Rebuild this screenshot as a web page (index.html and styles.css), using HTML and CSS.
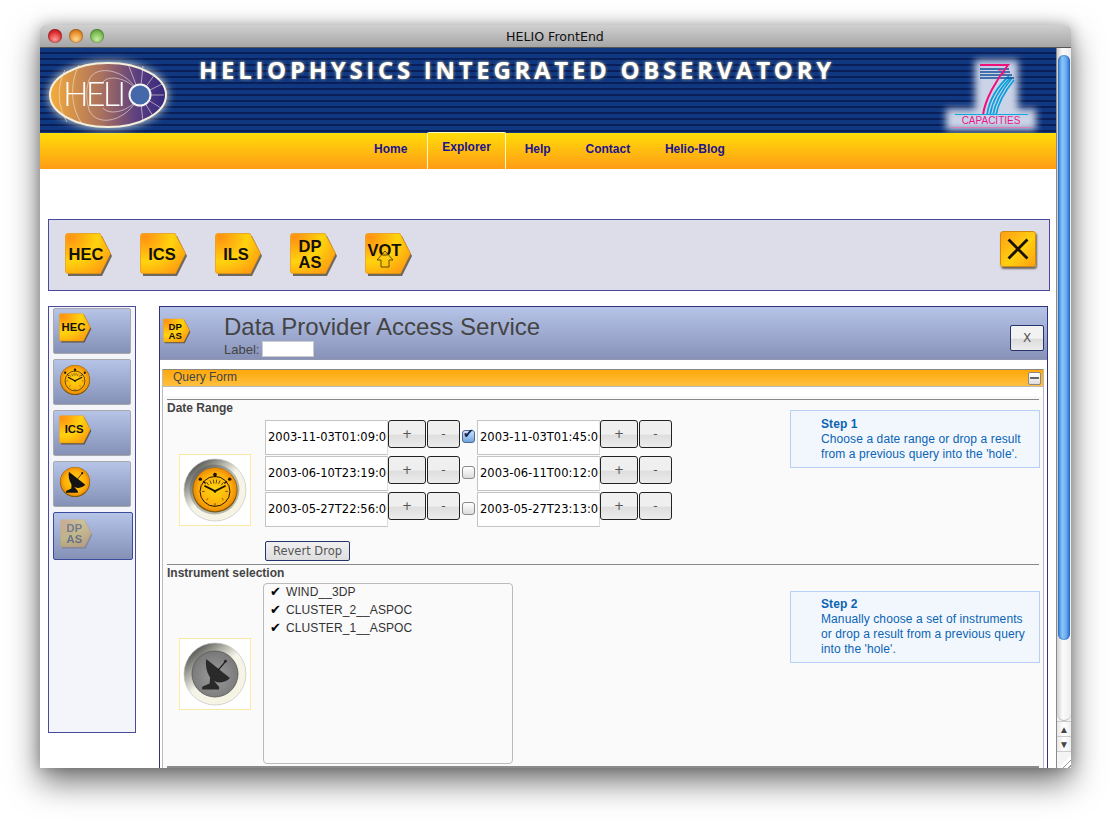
FILE: index.html
```html
<!DOCTYPE html>
<html lang="en">
<head>
    <meta charset="UTF-8">
    <title>HELIO FrontEnd</title>
    <link rel="stylesheet" href="styles.css">
</head>
<body>
    <!-- shared icon shapes -->
    <svg class="defs" aria-hidden="true">
        <defs>
            <radialGradient id="tagFill" cx="0.1" cy="0.1" r="1.1">
                <stop offset="0" stop-color="#ff9212"/>
                <stop offset="0.55" stop-color="#ffd30e"/>
                <stop offset="1" stop-color="#ff9a10"/>
            </radialGradient>
            <radialGradient id="goldFill" cx="0.5" cy="0.5" r="0.52">
                <stop offset="0" stop-color="#ffd40e"/>
                <stop offset="0.7" stop-color="#ffb00a"/>
                <stop offset="1" stop-color="#ea8406"/>
            </radialGradient>
            <radialGradient id="greyFill" cx="0.5" cy="0.55" r="0.55">
                <stop offset="0" stop-color="#9c9c9c"/>
                <stop offset="1" stop-color="#787878"/>
            </radialGradient>
            <linearGradient id="bezelFill" x1="0.1" y1="0.05" x2="0.85" y2="0.95">
                <stop offset="0" stop-color="#3a3a3a"/>
                <stop offset="0.28" stop-color="#a8a8a0"/>
                <stop offset="0.5" stop-color="#f4f4e8"/>
                <stop offset="1" stop-color="#f6f4e2"/>
            </linearGradient>
            <linearGradient id="helioFill" x1="0" y1="0" x2="1" y2="0">
                <stop offset="0" stop-color="#f6ac3a"/>
                <stop offset="0.45" stop-color="#a8705f"/>
                <stop offset="0.75" stop-color="#5c3f80"/>
                <stop offset="1" stop-color="#33277e"/>
            </linearGradient>
            <symbol id="tag" viewBox="0 0 48 43">
                <path d="M3 3 H37 L47 23 L37 43 H3 Z" fill="#4a4030" opacity="0.75"/>
                <path d="M3 0.5 H35 L45.5 20.5 L35.5 40.5 H3 Q0.5 40.5 0.5 38 V3 Q0.5 0.5 3 0.5 Z" fill="url(#tagFill)" stroke="#e8960c" stroke-width="0.7"/>
            </symbol>
            <symbol id="clock" viewBox="0 0 34 34">
                <circle cx="17" cy="17" r="16" fill="#7a5a08"/>
                <circle cx="17" cy="16.6" r="15.4" fill="url(#goldFill)"/>
                <circle cx="17" cy="18" r="10.6" fill="none" stroke="#1c1400" stroke-width="0.7"/>
                <circle cx="17" cy="6" r="1.3" fill="#1c1400"/>
                <circle cx="6.6" cy="9.3" r="1.2" fill="#1c1400"/>
                <circle cx="27.4" cy="9.3" r="1.2" fill="#1c1400"/>
                <path d="M8.6 10.8 L10.4 12.4 M25.4 10.8 L23.6 12.4 M17 7 V8" stroke="#1c1400" stroke-width="1"/>
                <path d="M9.5 14 L17 17.8 L24.5 14" fill="none" stroke="#1c1400" stroke-width="1.3"/>
                <path d="M11 11.5 L12.6 13.6 M13.4 10.3 L14.5 12.8 M15.8 9.6 L16.2 12.4 M18.2 9.6 L17.8 12.4 M20.6 10.3 L19.5 12.8 M23 11.5 L21.4 13.6 M17 26.4 V28 M8 18 H9.6 M24.4 18 H26 M11 24 L12.2 22.9 M23 24 L21.8 22.9" stroke="#1c1400" stroke-width="0.5"/>
                <circle cx="17" cy="18" r="0.9" fill="#1c1400"/>
            </symbol>
            <symbol id="dishMark" viewBox="0 0 34 34">
                <path d="M10.5 6 L28 20 C24 24.5 16.5 24.5 13 19 C10.5 15 9.8 10.5 10.5 6 Z"/>
                <path d="M13.5 18 L13 24 L7.5 26.5 V28.5 H20 V26.5 L17 23 Z"/>
                <path d="M19.5 14 L24.5 8" stroke="#111" stroke-width="0.8"/>
                <circle cx="24.7" cy="7.6" r="1.1"/>
            </symbol>
            <symbol id="dish" viewBox="0 0 34 34">
                <circle cx="17" cy="17" r="16" fill="#7a5a08"/>
                <circle cx="17" cy="16.6" r="15.4" fill="url(#goldFill)"/>
                <use href="#dishMark" width="34" height="34" fill="#141414"/>
            </symbol>
        </defs>
    </svg>

    <div class="window">
        <div class="titlebar">
            <span class="light light-red"></span>
            <span class="light light-amber"></span>
            <span class="light light-green"></span>
            <span class="window-title">HELIO FrontEnd</span>
        </div>
        <div class="window-body">
            <div class="page">
                <header class="banner">
                    <svg class="helio-logo" viewBox="0 0 130 78">
                        <ellipse cx="65" cy="39" rx="58" ry="32" fill="url(#helioFill)" stroke="#f4f0dc" stroke-width="2"/>
                        <g fill="none" stroke="#f0e6e2" stroke-width="0.7" opacity="0.85">
                            <path d="M22 14 C14 30 14 50 24 66"/>
                            <path d="M36 9 C26 28 28 54 40 69"/>
                            <path d="M97 39 C84 12 52 8 46 24 C42 36 44 46 46 54 C54 72 84 66 97 39 Z"/>
                            <path d="M97 39 C88 22 66 18 60 26 M97 39 C88 56 66 60 60 52"/>
                            <path d="M97 39 L112 18 M97 39 L119 28 M97 39 L121 39 M97 39 L118 52 M97 39 L110 60 M97 39 L100 66 M97 39 L100 10 M97 39 L85 8"/>
                        </g>
                        <circle cx="97" cy="39" r="10.5" fill="#4468aa" stroke="#f4f4f4" stroke-width="2"/>
                        <text class="helio-word" x="20" y="50" textLength="63">HELI</text>
                    </svg>
                    <h1 class="site-title">HELIOPHYSICS INTEGRATED OBSERVATORY</h1>
                    <svg class="fp7-logo" viewBox="0 0 104 84">
                        <defs>
                            <filter id="fp7Blur" x="-20%" y="-20%" width="140%" height="140%">
                                <feGaussianBlur stdDeviation="3.5"/>
                            </filter>
                        </defs>
                        <path d="M36 11 H79 V60 H97 V81 H7 V60 H36 Z" fill="#cbd3e6" filter="url(#fp7Blur)"/>
                        <g fill="none" stroke="#0a9fdc" stroke-width="1.7">
                            <path d="M48 66 C50 52 58 38 70 27"/>
                            <path d="M51 66 C53 53 61 39 72 28"/>
                            <path d="M54 66 C56 54 64 40 73 29"/>
                            <path d="M57 66 C59 55 66 42 75 31"/>
                        </g>
                        <path d="M41 20 H70 M41 23 H71 M41 26 H73 M41 29 H75" stroke="#14509c" stroke-width="1.6"/>
                        <path d="M41 16 H69 C58 30 46 50 44 66" fill="none" stroke="#f0107c" stroke-width="2"/>
                        <path d="M59 21 L63 21 M62 25 L66 25" stroke="#f0107c" stroke-width="1.2"/>
                        <path d="M16 65.5 H89" stroke="#10a8e0" stroke-width="1.2"/>
                        <text class="fp7-word" x="52" y="75">CAPACITIES</text>
                        <path d="M12 78.5 H93" stroke="#f070b0" stroke-width="0.8"/>
                    </svg>
                </header>

                <nav class="main-nav">
                    <a class="nav-item">Home</a>
                    <a class="nav-item nav-active">Explorer</a>
                    <a class="nav-item">Help</a>
                    <a class="nav-item">Contact</a>
                    <a class="nav-item">Helio-Blog</a>
                </nav>

                <section class="toolbar">
                    <svg class="tag-lg" viewBox="0 0 48 43"><use href="#tag" width="48" height="43"/><text class="tag-text" x="21" y="26.5" text-anchor="middle">HEC</text></svg>
                    <svg class="tag-lg" viewBox="0 0 48 43"><use href="#tag" width="48" height="43"/><text class="tag-text" x="22" y="26.5" text-anchor="middle">ICS</text></svg>
                    <svg class="tag-lg" viewBox="0 0 48 43"><use href="#tag" width="48" height="43"/><text class="tag-text" x="21" y="26.5" text-anchor="middle">ILS</text></svg>
                    <svg class="tag-lg" viewBox="0 0 48 43"><use href="#tag" width="48" height="43"/><text class="tag-text" x="20" y="19" text-anchor="middle">DP</text><text class="tag-text" x="20" y="35" text-anchor="middle">AS</text></svg>
                    <svg class="tag-lg" viewBox="0 0 48 43"><use href="#tag" width="48" height="43"/><text class="tag-text" x="19.5" y="23" text-anchor="middle">VOT</text><path d="M20 18 L28 27 H24 V34 H16 V27 H12 Z" fill="#ffc80e" fill-opacity="0.6" stroke="#3a3000" stroke-width="0.8"/></svg>
                    <button class="clear-all">
                        <svg viewBox="0 0 36 36"><path d="M8 8 L28 28 M28 8 L8 28" stroke="#1a1200" stroke-width="3"/></svg>
                    </button>
                </section>

                <div class="workspace">
                    <aside class="history">
                        <div class="history-item"><svg class="tag-sm" viewBox="0 0 48 43"><use href="#tag" width="48" height="43"/><text class="tag-text" x="21" y="26.5" text-anchor="middle">HEC</text></svg></div>
                        <div class="history-item"><svg class="round-sm"><use href="#clock" width="32" height="32"/></svg></div>
                        <div class="history-item"><svg class="tag-sm" viewBox="0 0 48 43"><use href="#tag" width="48" height="43"/><text class="tag-text" x="22" y="26.5" text-anchor="middle">ICS</text></svg></div>
                        <div class="history-item"><svg class="round-sm"><use href="#dish" width="32" height="32"/></svg></div>
                        <div class="history-item history-current"><svg class="tag-sm tag-faded" viewBox="0 0 48 43"><use href="#tag" width="48" height="43"/><text class="tag-text" x="21" y="19" text-anchor="middle">DP</text><text class="tag-text" x="21" y="35" text-anchor="middle">AS</text></svg></div>
                    </aside>

                    <main class="panel">
                        <div class="panel-head">
                            <svg class="tag-head" viewBox="0 0 48 43"><use href="#tag" width="48" height="43"/><text class="tag-text" x="21" y="19" text-anchor="middle">DP</text><text class="tag-text" x="21" y="35" text-anchor="middle">AS</text></svg>
                            <div class="panel-titles">
                                <h2 class="panel-title">Data Provider Access Service</h2>
                                <label class="panel-label">Label: <input class="label-input" type="text"></label>
                            </div>
                            <button class="close-btn">X</button>
                        </div>

                        <div class="form-box">
                            <div class="form-bar">
                                <span>Query Form</span>
                                <span class="collapse-btn"></span>
                            </div>
                            <div class="form-body">
                                <div class="section-line">Date Range</div>
                                <div class="section section-dates">
                                    <div class="icon-box">
                                        <svg class="bezel" viewBox="0 0 64 64">
                                            <circle cx="32" cy="32" r="31" fill="url(#bezelFill)" stroke="#bbb" stroke-width="0.6"/>
                                            <circle cx="31.5" cy="31.5" r="25" fill="#444" opacity="0.35"/>
                                            <use href="#clock" x="8" y="8" width="48" height="48"/>
                                        </svg>
                                    </div>
                                    <div class="dates">
                                        <div class="date-row">
                                            <input class="date-input" type="text" value="2003-11-03T01:09:00">
                                            <button class="step-btn">+</button>
                                            <button class="step-btn step-minus">-</button>
                                            <input class="date-check" type="checkbox" checked>
                                            <input class="date-input" type="text" value="2003-11-03T01:45:00">
                                            <button class="step-btn">+</button>
                                            <button class="step-btn step-minus">-</button>
                                        </div>
                                        <div class="date-row">
                                            <input class="date-input" type="text" value="2003-06-10T23:19:00">
                                            <button class="step-btn">+</button>
                                            <button class="step-btn step-minus">-</button>
                                            <input class="date-check" type="checkbox">
                                            <input class="date-input" type="text" value="2003-06-11T00:12:00">
                                            <button class="step-btn">+</button>
                                            <button class="step-btn step-minus">-</button>
                                        </div>
                                        <div class="date-row">
                                            <input class="date-input" type="text" value="2003-05-27T22:56:00">
                                            <button class="step-btn">+</button>
                                            <button class="step-btn step-minus">-</button>
                                            <input class="date-check" type="checkbox">
                                            <input class="date-input" type="text" value="2003-05-27T23:13:00">
                                            <button class="step-btn">+</button>
                                            <button class="step-btn step-minus">-</button>
                                        </div>
                                        <button class="revert-btn">Revert Drop</button>
                                    </div>
                                    <div class="step-note">
                                        <strong>Step 1</strong><br>
                                        Choose a date range or drop a result from a previous query into the 'hole'.
                                    </div>
                                </div>

                                <div class="section-line">Instrument selection</div>
                                <div class="section section-instruments">
                                    <div class="icon-box icon-box-dish">
                                        <svg class="bezel" viewBox="0 0 64 64">
                                            <circle cx="32" cy="32" r="31" fill="url(#bezelFill)" stroke="#bbb" stroke-width="0.6"/>
                                            <circle cx="32" cy="32" r="23" fill="url(#greyFill)" stroke="#555" stroke-width="0.8"/>
                                            <use href="#dishMark" x="9" y="9" width="46" height="46" fill="#2a2a2a"/>
                                        </svg>
                                    </div>
                                    <ul class="instruments">
                                        <li>WIND__3DP</li>
                                        <li>CLUSTER_2__ASPOC</li>
                                        <li>CLUSTER_1__ASPOC</li>
                                    </ul>
                                    <div class="step-note step-note-2">
                                        <strong>Step 2</strong><br>
                                        Manually choose a set of instruments or drop a result from a previous query into the 'hole'.
                                    </div>
                                </div>
                                <div class="form-end"></div>
                            </div>
                        </div>
                    </main>
                </div>
            </div>

            <div class="scrollbar">
                <div class="scroll-track"><div class="scroll-thumb"></div></div>
                <div class="scroll-arrow">&#9650;</div>
                <div class="scroll-arrow">&#9660;</div>
                <div class="scroll-grip"></div>
            </div>
        </div>
    </div>
</body>
</html>
```

FILE: styles.css
```css
html, body {
    height: 100%;
}

body {
    margin: 0;
    padding: 25px 0 0 40px;
    box-sizing: border-box;
    background-color: #fff;
    font-family: "Liberation Sans", Arial, sans-serif;
    font-size: 12px;
    overflow: hidden;
}

.defs {
    display: block;
    width: 0;
    height: 0;
}

.window {
    width: 1031px;
    height: 743px;
    display: flex;
    flex-direction: column;
    border-radius: 5px 5px 0 0;
    overflow: hidden;
    box-shadow: 0 14px 32px rgba(0, 0, 0, 0.55), 0 0 14px rgba(0, 0, 0, 0.25);
}

/* title bar */
.titlebar {
    flex: 0 0 23px;
    display: flex;
    align-items: center;
    gap: 7px;
    padding-left: 8px;
    background: linear-gradient(#d0d0d0, #a6a6a6);
    border-bottom: 1px solid #555;
    box-sizing: border-box;
}

.light {
    width: 14px;
    height: 14px;
    border-radius: 50%;
    box-shadow: inset 0 0 2px rgba(0, 0, 0, 0.6);
}

.light-red {
    background: radial-gradient(circle at 50% 75%, #ff9a94, #dc2a2e 60%, #a81820);
}

.light-amber {
    background: radial-gradient(circle at 50% 75%, #ffd890, #e88a28 60%, #b46010);
}

.light-green {
    background: radial-gradient(circle at 50% 75%, #c4f0a0, #78b850 60%, #4a8a2c);
}

.window-title {
    margin-left: 395px;
    font-family: "DejaVu Sans", sans-serif;
    font-size: 12.6px;
    color: #111;
}

.window-body {
    flex: 1;
    display: flex;
    min-height: 0;
}

.page {
    width: 1016px;
    background-color: #fff;
    overflow: hidden;
}

/* banner */
.banner {
    height: 85px;
    display: flex;
    align-items: flex-start;
    background-color: #0e3478;
    background-image: repeating-linear-gradient(#103880 0, #103880 4px, #0a1f58 4px, #0a1f58 6px);
}

.helio-logo {
    width: 130px;
    height: 78px;
    margin: 8px 0 0 3px;
    filter: drop-shadow(0 0 5px rgba(255, 250, 225, 0.9));
}

.helio-word {
    font-family: Lato, sans-serif;
    font-weight: 300;
    font-size: 34px;
    fill: #fff;
}

.site-title {
    margin: 7px 0 0 26px;
    font-family: "Open Sans", sans-serif;
    font-size: 24px;
    font-weight: 700;
    line-height: 30px;
    letter-spacing: 3.7px;
    white-space: nowrap;
    color: #fff;
    text-shadow: 0 0 3px #d8c890;
}

.fp7-logo {
    width: 104px;
    height: 84px;
    margin: 1px 13px 0 auto;
    flex: none;
}

.fp7-word {
    font-family: "Liberation Sans", sans-serif;
    font-size: 10px;
    fill: #e8188c;
    text-anchor: middle;
}

/* nav */
.main-nav {
    height: 36px;
    display: flex;
    justify-content: center;
    padding-left: 3px;
    background: linear-gradient(#ffdc08, #ff9c16);
}

.nav-item {
    padding: 8px 16.4px 0;
    border: 1px solid transparent;
    border-bottom: 0;
    font-weight: bold;
    font-size: 12px;
    color: #1c148c;
}

.nav-active {
    margin: -1px 1px 0 2px;
    padding: 7px 14.4px 0;
    border-color: #fff6c8;
    border-radius: 2px 2px 0 0;
}

/* toolbar of dragable services */
.toolbar {
    height: 72px;
    margin: 50px 6px 15px 8px;
    padding: 0 13px 0 16px;
    box-sizing: border-box;
    display: flex;
    align-items: flex-start;
    gap: 27px;
    background-color: #dddde9;
    border: 1px solid #4a4a9c;
}

.tag-lg {
    width: 48px;
    height: 43px;
    margin-top: 13px;
    flex: none;
    overflow: visible;
}

.tag-text {
    font-family: "Liberation Sans", sans-serif;
    font-weight: bold;
    font-size: 16.5px;
    fill: #141008;
}

.clear-all {
    width: 36px;
    height: 36px;
    margin: 11px 0 0 auto;
    padding: 0;
    border: 1px solid #d08a10;
    border-radius: 3px;
    background: linear-gradient(135deg, #ff9e12, #ffd010 55%, #ffa010);
    box-shadow: 1px 2px 2px rgba(60, 50, 30, 0.7);
}

.clear-all svg {
    display: block;
    width: 100%;
    height: 100%;
}

/* main area */
.workspace {
    display: flex;
    align-items: flex-start;
    padding-left: 8px;
}

.history {
    width: 88px;
    height: 427px;
    box-sizing: border-box;
    flex: none;
    margin-right: 23px;
    padding: 1px 0 0 4px;
    display: flex;
    flex-direction: column;
    gap: 5px;
    background-color: #f3f5fb;
    border: 1px solid #4a4a9c;
}

.history-item {
    width: 78px;
    height: 46px;
    box-sizing: border-box;
    padding: 4px 0 0 5px;
    background: linear-gradient(#b6c4e8, #8490b6);
    border: 1px solid #a8a8a8;
    border-radius: 2px;
}

.history-current {
    width: 80px;
    height: 48px;
    padding: 6px 0 0 6px;
    border-color: #3c4c9c;
}

.tag-sm {
    display: block;
    width: 33px;
    height: 30px;
    overflow: visible;
}

.tag-faded {
    opacity: 0.35;
}

.round-sm {
    display: block;
    width: 32px;
    height: 32px;
}

.panel {
    width: 889px;
    flex: none;
    box-sizing: border-box;
    border: 1px solid #33337c;
    border-bottom: 0;
}

.panel-head {
    height: 53px;
    display: flex;
    align-items: flex-start;
    background: linear-gradient(#b6c4e8, #8892b8);
    border-bottom: 1px solid #9098b0;
    box-sizing: border-box;
}

.tag-head {
    width: 28px;
    height: 26px;
    margin: 11px 0 0 3px;
    flex: none;
    overflow: visible;
}

.panel-titles {
    margin-left: 33px;
}

.panel-title {
    margin: 6px 0 0;
    font-size: 24px;
    font-weight: normal;
    line-height: 28px;
    color: #444;
}

.panel-label {
    display: block;
    font-size: 13px;
    line-height: 17px;
    color: #444;
}

.label-input {
    width: 52px;
    height: 16px;
    margin: 0 0 0 -1px;
    padding: 0;
    box-sizing: border-box;
    vertical-align: top;
    border: 1px solid #ccc;
    background-color: #fff;
}

.close-btn {
    width: 34px;
    height: 26px;
    margin: 18px 3px 0 auto;
    padding: 0;
    border: 1px solid #26336c;
    border-radius: 2px;
    background: linear-gradient(#f2f2f2 50%, #dcdcdc 55%, #ececec);
    font-family: "DejaVu Sans", sans-serif;
    font-size: 12px;
    color: #555;
}

/* query form */
.form-box {
    margin: 9px 3px 0 2px;
    border-left: 1px solid #bbb;
    border-right: 1px solid #bbb;
}

.form-bar {
    height: 18px;
    box-sizing: border-box;
    display: flex;
    align-items: center;
    justify-content: space-between;
    padding: 0 2px 2px 10px;
    background: linear-gradient(#ffa80a, #ffc040);
    border-top: 1px solid #888;
    border-bottom: 1px solid #bbb;
    color: #444;
}

.collapse-btn {
    width: 13px;
    height: 13px;
    box-sizing: border-box;
    margin-top: 2px;
    border: 1px solid #888;
    border-radius: 2px;
    background: linear-gradient(#fff, #ddd);
    display: flex;
    align-items: center;
    justify-content: center;
}

.collapse-btn::before {
    content: "";
    width: 9px;
    height: 2px;
    background-color: #666;
}

.form-body {
    margin-top: 9px;
    padding: 3px 4px 0 4px;
    background-color: #fafafa;
}

.section-line {
    padding-top: 1px;
    border-top: 1px solid #888;
    font-weight: bold;
    font-size: 12px;
    line-height: 14px;
    color: #444;
}

.section {
    display: flex;
    align-items: flex-start;
}

.section-dates {
    height: 149px;
    padding-top: 5px;
    box-sizing: border-box;
}

.icon-box {
    width: 72px;
    height: 72px;
    box-sizing: border-box;
    flex: none;
    margin: 34px 14px 0 12px;
    padding: 3px;
    background-color: #fff;
    border: 1px solid #fce9a6;
}

.bezel {
    display: block;
    width: 100%;
    height: 100%;
}

.dates {
    width: 525px;
    flex: none;
}

.date-row {
    height: 36px;
    display: flex;
    align-items: flex-start;
}

.date-input {
    width: 123px;
    height: 35px;
    box-sizing: border-box;
    flex: none;
    margin: 0;
    padding: 0 0 2px 2px;
    border: 1px solid #c4c4c4;
    border-right-color: #ddd;
    background-color: #fff;
    font-family: "DejaVu Sans", sans-serif;
    font-size: 11.5px;
    color: #000;
}

.step-btn {
    width: 38px;
    height: 28px;
    flex: none;
    margin: 0;
    padding: 0;
    border: 1px solid #222;
    border-radius: 3px;
    background: linear-gradient(#efefef 50%, #dedede 55%, #ececec);
    font-family: "DejaVu Sans", sans-serif;
    font-size: 12px;
    color: #555;
}

.step-minus {
    width: 33px;
    margin-left: 1px;
}

.date-check {
    appearance: none;
    width: 13px;
    height: 13px;
    margin: 10px 2px 0 2px;
    flex: none;
    position: relative;
    border: 1px solid #8a8a8a;
    border-radius: 3px;
    background: linear-gradient(#fff, #dcdcdc);
}

.date-check:checked {
    border-color: #4a6a98;
    background: linear-gradient(#d4e4f8, #6ea4de);
}

.date-check:checked::after {
    content: "\2714";
    position: absolute;
    left: 0;
    top: -4px;
    font-family: "DejaVu Sans", sans-serif;
    font-size: 13px;
    line-height: 14px;
    color: #12245c;
}

.revert-btn {
    display: block;
    width: 85px;
    height: 20px;
    margin-top: 13px;
    padding: 0;
    border: 1px solid #26336c;
    border-radius: 2px;
    background: linear-gradient(#f0f0f0, #dedede);
    font-family: "DejaVu Sans", sans-serif;
    font-size: 11.5px;
    color: #555;
}

.step-note {
    width: 250px;
    box-sizing: border-box;
    flex: none;
    margin: -10px 0 0 0;
    padding: 6px 10px 5px 30px;
    font-size: 12px;
    line-height: 15px;
    letter-spacing: 0.1px;
    color: #0a64b4;
    background-color: #f2f7fd;
    border: 1px solid #b8d0f8;
}

.section-instruments {
    height: 186px;
    box-sizing: border-box;
    padding-top: 3px;
}

.icon-box-dish {
    margin: 55px 12px 0 12px;
}

.instruments {
    width: 250px;
    height: 181px;
    box-sizing: border-box;
    flex: none;
    margin: 0;
    padding: 0 0 0 22px;
    list-style: none;
    border: 1px solid #bbb;
    border-radius: 4px;
    font-size: 12px;
    letter-spacing: 0.1px;
    color: #333;
}

.instruments li {
    height: 18px;
    line-height: 16px;
    white-space: nowrap;
}

.instruments li::before {
    content: "\2714";
    display: inline-block;
    width: 12px;
    margin-left: -16px;
    margin-right: 4px;
    font-family: "DejaVu Sans", sans-serif;
    font-size: 13px;
    line-height: 14px;
    color: #000;
}

.step-note-2 {
    margin: 8px 0 0 277px;
    padding-top: 5px;
}

.form-end {
    height: 2px;
    background-color: #8a8a8a;
}

/* aqua scrollbar */
.scrollbar {
    width: 15px;
    flex: none;
    display: flex;
    flex-direction: column;
    box-sizing: border-box;
    border-left: 1px solid #8a8a8a;
    background-color: #f2f2f2;
}

.scroll-track {
    height: 673px;
    padding: 7px 1px 0 1px;
    box-sizing: border-box;
    background: linear-gradient(90deg, #cfcfcf, #fbfbfb 40%, #ededed);
    border-radius: 0 0 7px 7px;
    border-bottom: 1px solid #bbb;
}

.scroll-thumb {
    height: 585px;
    border-radius: 6px;
    background: linear-gradient(90deg, #2f78d8, #8cc4f6 35%, #6cb0f4 65%, #2a6cc8);
    box-shadow: inset 0 0 2px #1c50a0;
}

.scroll-arrow {
    height: 15px;
    font-size: 10px;
    line-height: 15px;
    text-align: center;
    color: #444;
    border-top: 1px solid #ccc;
    box-sizing: border-box;
    background: linear-gradient(90deg, #e8e8e8, #fff, #eee);
}

.scroll-grip {
    flex: 1;
    background:
        linear-gradient(135deg, #f4f4f4 58%, rgba(244, 244, 244, 0) 58%),
        repeating-linear-gradient(135deg, #fff 0, #fff 3px, #999 3px, #999 4px);
    border-top: 1px solid #ccc;
}
```
